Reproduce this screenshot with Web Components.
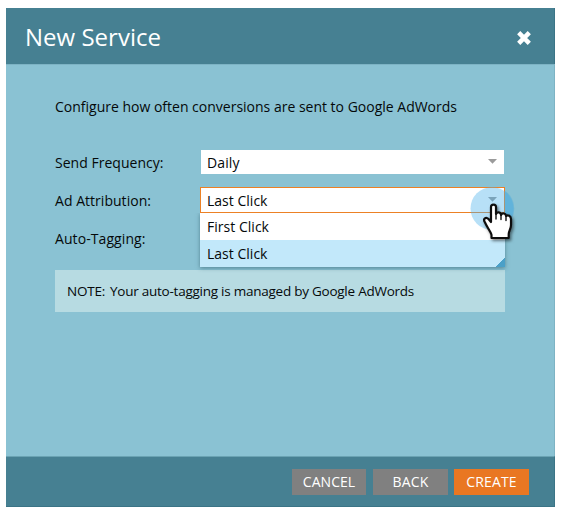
<!DOCTYPE html>
<html lang="en"><head><meta charset="utf-8"><title>New Service</title>
<style>
html,body{margin:0;background:#fff}
body{font:14px/20px "Open Sans","Noto Sans",sans-serif;color:#05090a}
</style></head><body>
<service-dialog>
  <dialog-header slot="header"><fit-text w="136">New Service</fit-text></dialog-header>
  <p slot="intro"><fit-text w="402">Configure how often conversions are sent to Google AdWords</fit-text></p>
  <form-row><fit-text slot="label" w="108.500">Send Frequency:</fit-text><select-box><fit-text w="32.5">Daily</fit-text></select-box></form-row>
  <form-row><fit-text slot="label" w="96">Ad Attribution:</fit-text>
    <select-box open><fit-text w="60.5">Last Click</fit-text>
      <option-item slot="menu"><fit-text w="62">First Click</fit-text></option-item>
      <option-item slot="menu" selected><fit-text w="60.5">Last Click</fit-text></option-item>
    </select-box></form-row>
  <form-row><fit-text slot="label" w="90.500">Auto-Tagging:</fit-text></form-row>
  <note-box slot="note"><fit-text w="38">NOTE:</fit-text><fit-text w="304">Your auto-tagging is managed by Google AdWords</fit-text></note-box>
  <action-button slot="footer" style="width:74px;margin-right:1px"><fit-text w="52.5">CANCEL</fit-text></action-button>
  <action-button slot="footer" style="width:75px"><fit-text w="36">BACK</fit-text></action-button>
  <action-button slot="footer" primary style="width:75px"><fit-text w="50.5">CREATE</fit-text></action-button>
</service-dialog>
<click-pointer></click-pointer>
<script>
const define=(name,html,setup)=>customElements.define(name,class extends HTMLElement{
  constructor(){super();this.attachShadow({mode:'open'}).innerHTML=html}
  connectedCallback(){if(setup)setup(this)}
});
define('dialog-header',`<style>
:host{display:flex;align-items:center;justify-content:space-between;height:56px;padding:0 22px 0 19px;box-sizing:border-box;background:#468092;color:#fff;border-right:1px solid #3b7486}
h1{font:400 24px/56px "Open Sans","Noto Sans",sans-serif;margin:2px 0 0}
svg{display:block;margin-top:4px}
</style><h1><slot></slot></h1>
<svg width="16" height="16" viewBox="0 0 16 16"><path d="M2.700 2.700 13.300 13.300M13.300 2.700 2.700 13.300" stroke="#fff" stroke-width="4.500"/></svg>`);
define('service-dialog',`<style>
:host{display:flex;flex-direction:column;width:549px;height:499px;margin:8px 0 0 6px;background:#8ac2d3}
main{flex:1;padding:0 49px;box-sizing:border-box;border-right:1px solid #7db3c4;border-top:1px solid #7db3c4}
::slotted(p){margin:32px 0 0;height:52px}
footer{height:51px;box-sizing:border-box;display:flex;gap:6px;justify-content:flex-end;padding:12px 25px 0 0;background:#468092;border-top:1px solid #6aa3b3;border-right:1px solid #3b7486;border-bottom:1px solid #3b7486}
::slotted(note-box){margin-top:7px}
</style><slot name="header"></slot><main><slot name="intro"></slot><slot></slot><slot name="note"></slot></main><footer><slot name="footer"></slot></footer>`);
define('form-row',`<style>:host{display:grid;grid-template-columns:145px 305px;height:38px;align-items:start}
div{height:26px;display:flex;align-items:center;padding-top:1px}
</style><div><slot name="label"></slot></div><slot></slot>`);
define('select-box',`<style>
:host{display:block;position:relative;height:26px}
.field{display:flex;align-items:center;justify-content:space-between;background:#fff;border:1px solid transparent;background-clip:padding-box;box-sizing:border-box;height:26px;padding:1px 7px 0 6px}
:host([open]) .field{border-color:#ec8125}
.menu{display:none;position:absolute;z-index:1;left:0;top:26px;width:305px;box-shadow:0 1px 4px #315d6ba0;clip-path:inset(0 -6px -6px -6px)}
:host([open]) .menu{display:block}
svg{margin-top:-3px}
</style><div class="field"><slot></slot><svg width="9" height="5"><path d="M0 0H9L4.5 4.7Z" fill="#9b9b9b"/></svg></div><div class="menu"><slot name="menu"></slot></div>`);
define('option-item',`<style>:host{display:flex;align-items:center;height:27px;padding-left:7px;background:#fff;box-sizing:border-box}
:host([selected]){background:linear-gradient(135deg,transparent 50%,#4ba0c8 52%) right bottom/10px 10px no-repeat #c2e8fa}</style><slot></slot>`);
define('note-box',`<style>:host{display:flex;align-items:center;gap:5px;height:42px;padding-left:12px;background:#b7dbe2;font-size:13.500px;box-sizing:border-box}</style><slot></slot>`);
define('action-button',`<style>:host{display:flex;align-items:center;justify-content:center;height:26px;background:#808080;color:#fff}
:host([primary]){background:#e97722}</style><slot></slot>`);
// Tracks a line of text out to a given width; defined after its containers so their fonts apply.
define('fit-text','<style>:host{display:inline-block;white-space:nowrap}</style><slot></slot>',el=>{
  const w=+el.getAttribute('w'),n=el.textContent.length;
  el.style.letterSpacing=((w-el.getBoundingClientRect().width)/n)+'px';
});
define('click-pointer',`<style>:host{position:absolute;z-index:3;left:466px;top:182px;display:block}svg{display:block}</style>
<svg width="56" height="66" viewBox="466 182 56 66">
<defs><filter id="s" x="-40%" y="-40%" width="190%" height="190%"><feDropShadow dx="1.5" dy="2" stdDeviation="1.5" flood-opacity=".5"/></filter></defs>
<circle cx="492" cy="208.5" r="21.5" fill="#4bb1ec" fill-opacity=".4"/>
<path d="M505 190.800A21.500 21.500 0 0 1 505 226.200Z" fill="#44a7da" fill-opacity=".35"/>
<path filter="url(#s)" d="M491 219V207C491 203.800 496 203.800 496 207V214C497 211.500 501 212 501 215C502 212.500 506 213.200 506 216C508 214.500 511 216 511 219V225C511 229 508.700 231 508.700 234V238H491.500V235C491 232 487.500 228 485 222.500C482.500 218.500 486 216.500 488.500 219L491 222Z" fill="#fff" stroke="#111" stroke-width="2.200" stroke-linejoin="round"/>
<path d="M496 213V219M501 214.500V219.500M506 216V220.500" stroke="#111" stroke-width="1.400" stroke-linecap="round"/>
</svg>`);
</script></body></html>
